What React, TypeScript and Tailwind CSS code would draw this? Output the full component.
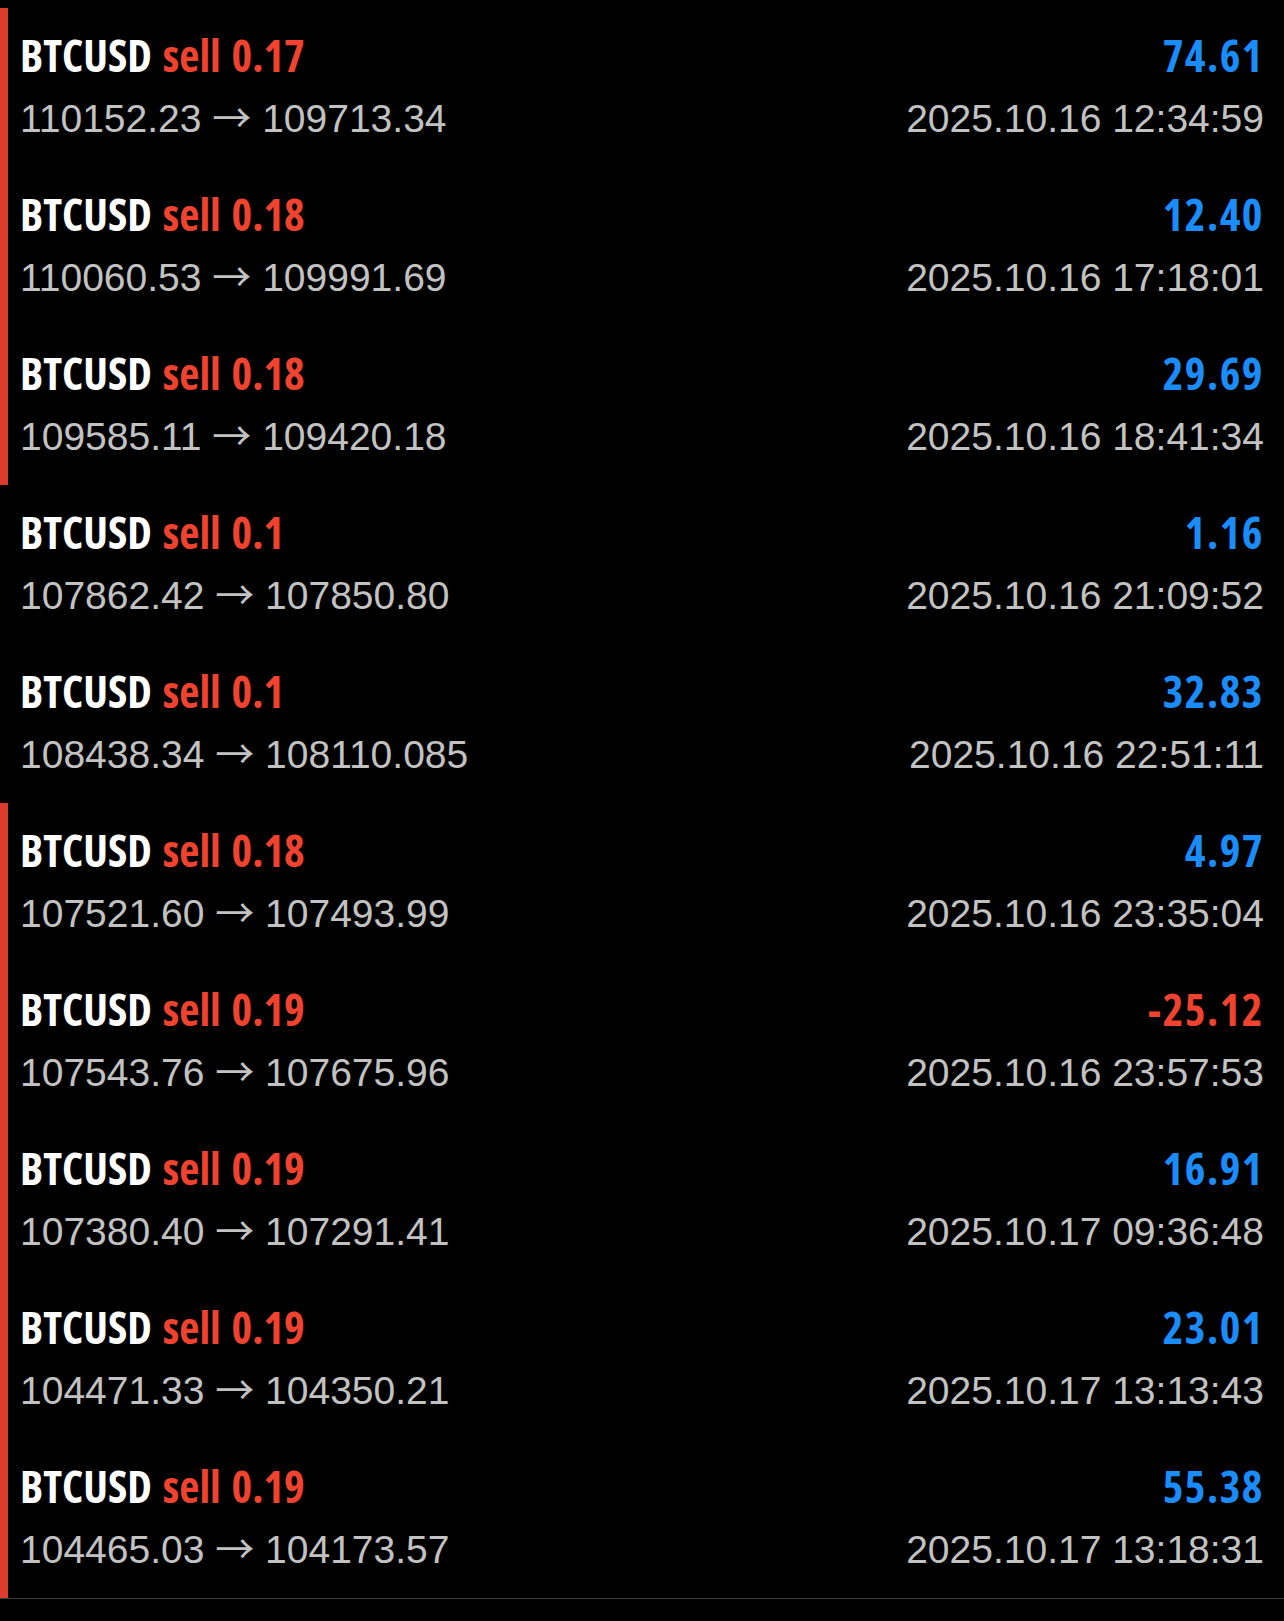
interface Deal {
  id: number;
  symbol: string;
  side: string;
  volume: string;
  open: string;
  close: string;
  profit: string;
  time: string;
  marked: boolean;
}

const deals: Deal[] = [
  { id: 1, symbol: "BTCUSD", side: "sell", volume: "0.17", open: "110152.23", close: "109713.34", profit: "74.61", time: "2025.10.16 12:34:59", marked: true },
  { id: 2, symbol: "BTCUSD", side: "sell", volume: "0.18", open: "110060.53", close: "109991.69", profit: "12.40", time: "2025.10.16 17:18:01", marked: true },
  { id: 3, symbol: "BTCUSD", side: "sell", volume: "0.18", open: "109585.11", close: "109420.18", profit: "29.69", time: "2025.10.16 18:41:34", marked: true },
  { id: 4, symbol: "BTCUSD", side: "sell", volume: "0.1", open: "107862.42", close: "107850.80", profit: "1.16", time: "2025.10.16 21:09:52", marked: false },
  { id: 5, symbol: "BTCUSD", side: "sell", volume: "0.1", open: "108438.34", close: "108110.085", profit: "32.83", time: "2025.10.16 22:51:11", marked: false },
  { id: 6, symbol: "BTCUSD", side: "sell", volume: "0.18", open: "107521.60", close: "107493.99", profit: "4.97", time: "2025.10.16 23:35:04", marked: true },
  { id: 7, symbol: "BTCUSD", side: "sell", volume: "0.19", open: "107543.76", close: "107675.96", profit: "-25.12", time: "2025.10.16 23:57:53", marked: true },
  { id: 8, symbol: "BTCUSD", side: "sell", volume: "0.19", open: "107380.40", close: "107291.41", profit: "16.91", time: "2025.10.17 09:36:48", marked: true },
  { id: 9, symbol: "BTCUSD", side: "sell", volume: "0.19", open: "104471.33", close: "104350.21", profit: "23.01", time: "2025.10.17 13:13:43", marked: true },
  { id: 10, symbol: "BTCUSD", side: "sell", volume: "0.19", open: "104465.03", close: "104173.57", profit: "55.38", time: "2025.10.17 13:18:31", marked: true },
];

// condensed bold headline, regular grey detail line
const headline = "font-['Open_Sans',sans-serif] font-bold font-stretch-condensed text-[44px] leading-[50px]";
const detail = "font-['Liberation_Sans',Arial,sans-serif] text-[39px] leading-[46px] mt-4 text-[#c2c2c2] whitespace-nowrap";

const DealRow = ({ deal }: { deal: Deal }) => {
  const loss = deal.profit.startsWith('-');

  return (
    <div
      className={`flex justify-between h-[159px] pl-3 pr-5 border-l-[8px] ${
        deal.marked ? 'border-[#dc3c2d]' : 'border-transparent'
      }`}
    >
      <div className="flex flex-col pt-[22px]">
        <div className={`${headline} whitespace-nowrap [word-spacing:3px]`}>
          <span className="text-white">{deal.symbol}</span>{' '}
          <span className="text-[#f0432f]">
            {deal.side} {deal.volume}
          </span>
        </div>
        <div className={detail}>
          {deal.open} <span className="font-['Noto_Sans_CJK_JP',sans-serif] leading-none">→</span> {deal.close}
        </div>
      </div>

      <div className="flex flex-col items-end pt-[22px]">
        <div className={`${headline} tracking-[1.5px] ${loss ? 'text-[#f0432f]' : 'text-[#1b8cfb]'}`}>
          {deal.profit}
        </div>
        <div className={detail}>{deal.time}</div>
      </div>
    </div>
  );
};

const App = () => {
  return (
    <div className="min-h-screen bg-black pt-2">
      <div className="border-b border-[#3c3c3c]">
        {deals.map((deal) => (
          <DealRow key={deal.id} deal={deal} />
        ))}
      </div>
    </div>
  );
};

export default App;
